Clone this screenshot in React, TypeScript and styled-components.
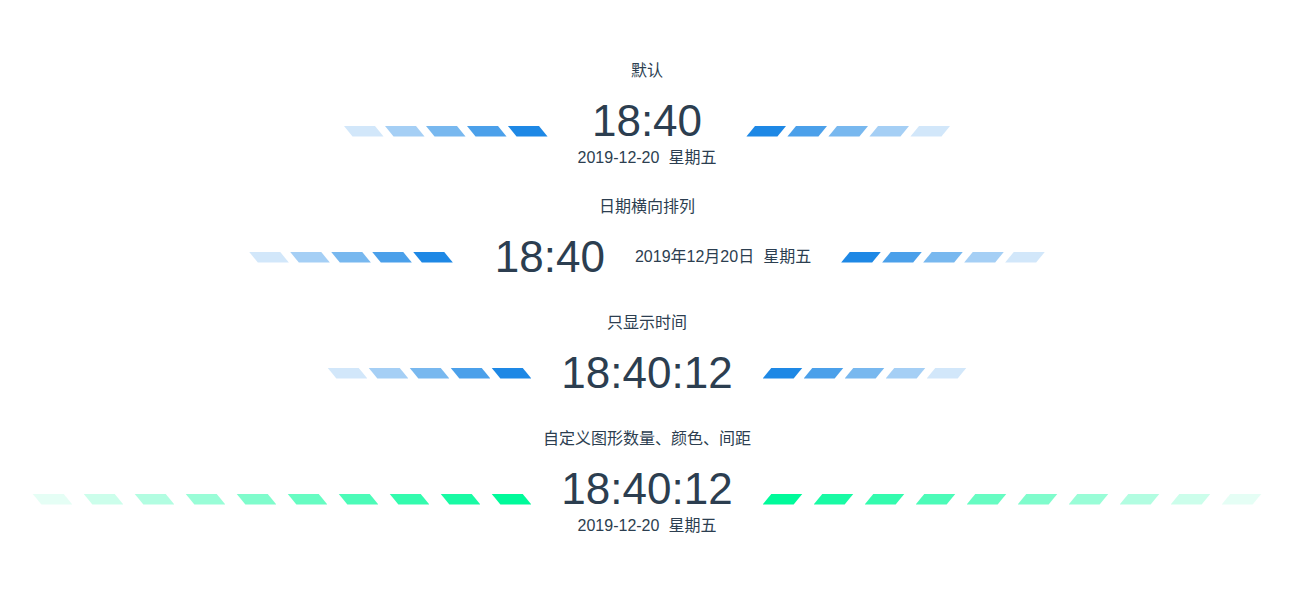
import React from 'react';
import styled, { createGlobalStyle } from 'styled-components';

const Global = createGlobalStyle`
  html, body { margin: 0; padding: 0; background: #ffffff; }
  body {
    font-family: "Liberation Sans", Arial, "Noto Sans CJK SC", sans-serif;
    color: #2c3e50;
  }
`;

const Page = styled.div`
  width: 1294px;
  padding-top: 61px;
  display: flex;
  flex-direction: column;
  align-items: center;
  gap: 30px;
`;

const Section = styled.section`
  display: flex;
  flex-direction: column;
  align-items: center;
`;

const Title = styled.div`
  font-size: 16px;
  line-height: 20px;
  margin-bottom: 14px;
  color: #2c3e50;
`;

const Row = styled.div`
  display: flex;
  align-items: center;
  justify-content: center;
`;

const Bars = styled.div<{ $gap: number }>`
  display: flex;
  gap: ${(p) => p.$gap}px;
`;

const Bar = styled.div<{ $dir: 'left' | 'right'; $color: string; $alpha: number }>`
  width: 40px;
  height: 11px;
  background: ${(p) => p.$color};
  opacity: ${(p) => p.$alpha};
  clip-path: ${(p) =>
    p.$dir === 'left'
      ? 'polygon(0 0, 31px 0, 100% 100%, 9px 100%)'
      : 'polygon(9px 0, 100% 0, 31px 100%, 0 100%)'};
`;

const Middle = styled.div<{ $horizontal: boolean }>`
  margin: 0 30px;
  padding-left: ${(p) => (p.$horizontal ? '12px' : '0')};
  display: flex;
  flex-direction: ${(p) => (p.$horizontal ? 'row' : 'column')};
  align-items: center;
`;

const Time = styled.div`
  font-size: 44px;
  line-height: 52px;
  color: #2c3e50;
  white-space: nowrap;
`;

const DateLine = styled.div<{ $horizontal: boolean }>`
  font-size: 16px;
  line-height: 18px;
  white-space: nowrap;
  color: #2c3e50;
  margin: ${(p) => (p.$horizontal ? '0 0 0 30px' : '2px 0 0 0')};
`;

const Week = styled.span`
  margin-left: 9px;
`;

type ClockProps = {
  title: string;
  time: string;
  date?: string;
  horizontal?: boolean;
  count?: number;
  color?: string;
  gap?: number;
};

const BarGroup: React.FC<{ dir: 'left' | 'right'; count: number; color: string; gap: number }> = ({
  dir,
  count,
  color,
  gap,
}) => {
  const items = Array.from({ length: count }, (_, i) => {
    const alpha = dir === 'left' ? (i + 1) / count : 1 - i / count;
    return <Bar key={i} $dir={dir} $color={color} $alpha={Number(alpha.toFixed(3))} />;
  });
  return <Bars $gap={gap}>{items}</Bars>;
};

const Clock: React.FC<ClockProps> = ({
  title,
  time,
  date,
  horizontal = false,
  count = 5,
  color = '#1e88e5',
  gap = 1,
}) => (
  <Section>
    <Title>{title}</Title>
    <Row>
      <BarGroup dir="left" count={count} color={color} gap={gap} />
      <Middle $horizontal={horizontal}>
        <Time>{time}</Time>
        {date && (
          <DateLine $horizontal={horizontal}>
            {date}
            <Week>星期五</Week>
          </DateLine>
        )}
      </Middle>
      <BarGroup dir="right" count={count} color={color} gap={gap} />
    </Row>
  </Section>
);

export default function App() {
  return (
    <>
      <Global />
      <Page>
        <Clock title="默认" time="18:40" date="2019-12-20" />
        <Clock title="日期横向排列" time="18:40" date="2019年12月20日" horizontal />
        <Clock title="只显示时间" time="18:40:12" />
        <Clock
          title="自定义图形数量、颜色、间距"
          time="18:40:12"
          date="2019-12-20"
          count={10}
          color="#00fa9a"
          gap={11}
        />
      </Page>
    </>
  );
}
